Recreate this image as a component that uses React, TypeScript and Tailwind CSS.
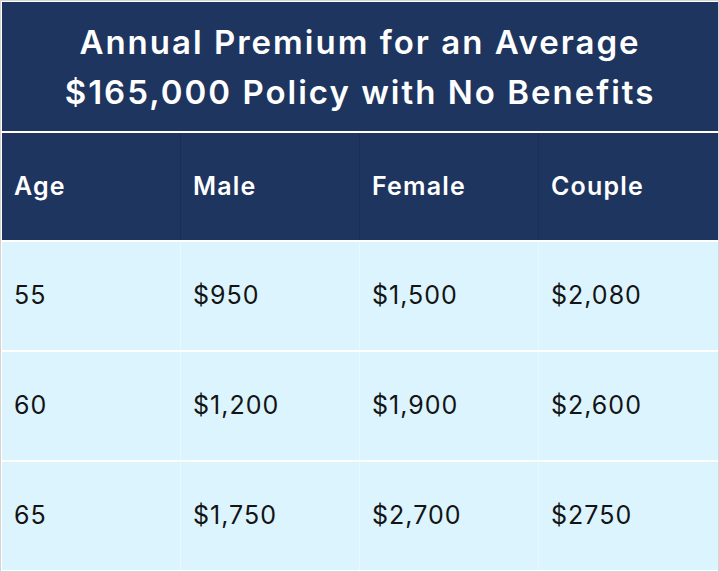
import React from "react";

const rows = [
  ["55", "$950", "$1,500", "$2,080"],
  ["60", "$1,200", "$1,900", "$2,600"],
  ["65", "$1,750", "$2,700", "$2750"],
];

const headers = ["Age", "Male", "Female", "Couple"];

export default function App() {
  return (
    <div className="w-[719px] h-[572px] bg-white border border-[#d4d4d4] p-px font-['Inter',sans-serif] overflow-hidden">
      <div className="flex flex-col gap-[2px] h-full w-[716px]">
        {/* Title */}
        <div className="h-[129px] bg-[#1e355f] flex flex-col items-center justify-center text-white text-[33px] font-semibold leading-[50px] tracking-[2px]">
          <div>Annual Premium for an Average</div>
          <div>$165,000 Policy with No Benefits</div>
        </div>

        {/* Header row */}
        <div className="h-[107px] grid grid-cols-4 bg-[#1e355f]">
          {headers.map((h, i) => (
            <div
              key={h}
              className={`flex items-center pl-[12px] text-white text-[25px] font-semibold tracking-[1.2px] ${i < 3 ? "border-r border-[#1a2f54]" : ""}`}
            >
              {h}
            </div>
          ))}
        </div>

        {/* Body rows */}
        {rows.map((r) => (
          <div key={r[0]} className="h-[108px] grid grid-cols-4 bg-[#dcf4fe]">
            {r.map((c, i) => (
              <div
                key={i}
                className={`flex items-center pl-[12px] text-[#141414] text-[25px] tracking-[1px] ${i < 3 ? "border-r border-[#eaf8fe]" : ""}`}
              >
                {c}
              </div>
            ))}
          </div>
        ))}
      </div>
    </div>
  );
}
